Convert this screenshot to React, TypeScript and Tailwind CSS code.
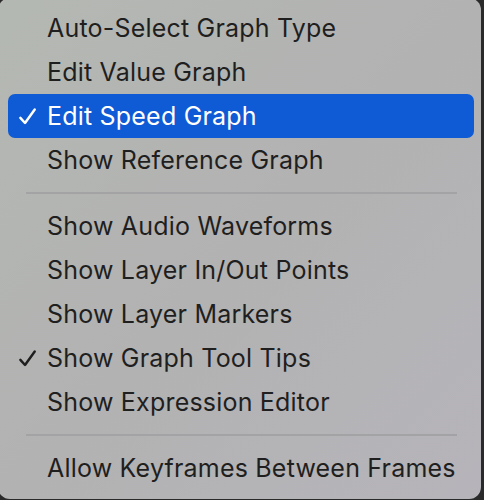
import React from "react";

type Item = { label: string; checked?: boolean; active?: boolean } | "sep";

const items: Item[] = [
  { label: "Auto-Select Graph Type" },
  { label: "Edit Value Graph" },
  { label: "Edit Speed Graph", checked: true, active: true },
  { label: "Show Reference Graph" },
  "sep",
  { label: "Show Audio Waveforms" },
  { label: "Show Layer In/Out Points" },
  { label: "Show Layer Markers" },
  { label: "Show Graph Tool Tips", checked: true },
  { label: "Show Expression Editor" },
  "sep",
  { label: "Allow Keyframes Between Frames" },
];

function Check({ color }: { color: string }) {
  return (
    <svg width="19" height="19" viewBox="0 0 20 20" fill="none">
      <path d="M2.5 11.4 L7.4 16.8 L17.6 2.6" stroke={color} strokeWidth="2.6" strokeLinecap="round" strokeLinejoin="round" />
    </svg>
  );
}

export default function App() {
  return (
    <div className="w-[484px] h-[500px] overflow-hidden bg-[#2a2a2a]">
      <div
        className="w-[483px] h-[501px] -mt-[2px] -ml-[2px] rounded-[12px] bg-gradient-to-br from-[#b4b8b2] via-[#b2b2b2] to-[#b6b4ba] pt-[8px] pl-[10px] pr-[7px]"
        style={{ fontFamily: "Inter, 'Noto Sans', sans-serif" }}
      >
        {items.map((it, i) =>
          it === "sep" ? (
            <div key={i} className="h-[22px] flex items-center pl-[18px] pr-[17px]">
              <div className="h-[2px] w-full bg-[#a3a3a5]" />
            </div>
          ) : (
            <div
              key={i}
              className={
                "h-[44px] flex items-center rounded-[7px] " +
                (it.active ? "bg-[#0f5ad5] text-white" : "text-[#1f1f1f]")
              }
            >
              <div className="w-[39px] flex justify-start pl-[10px] pt-[1px]">
                {it.checked ? <Check color={it.active ? "#ffffff" : "#1f1f1f"} /> : null}
              </div>
              <span className="text-[25px] leading-none tracking-[0.2px]">{it.label}</span>
            </div>
          )
        )}
      </div>
    </div>
  );
}
